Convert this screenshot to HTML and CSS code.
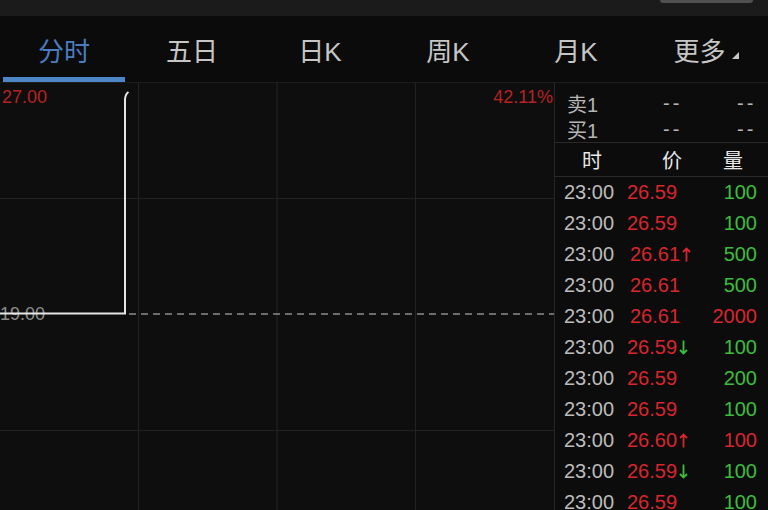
FILE: index.html
```html
<!DOCTYPE html>
<html lang="zh">
<head>
<meta charset="utf-8">
<title>分时</title>
<link rel="stylesheet" href="styles.css">
</head>
<body>
<div class="topstrip"><span class="pill"></span></div>
<nav class="tabs">
  <div class="tab active">分时</div>
  <div class="tab">五日</div>
  <div class="tab">日K</div>
  <div class="tab">周K</div>
  <div class="tab">月K</div>
  <div class="tab more">更多<span class="tri"></span></div>
</nav>
<main class="main">
  <section class="chart">
    <span class="lbl lbl-high">27.00</span>
    <span class="lbl lbl-pct">42.11%</span>
    <span class="lbl lbl-base">19.00</span>
    <svg class="canvas" width="554" height="427" viewBox="0 0 554 427">
      <g stroke="#222222" stroke-width="1.2" fill="none">
        <line x1="138.5" y1="0" x2="138.5" y2="427"/>
        <line x1="277" y1="0" x2="277" y2="427"/>
        <line x1="415.5" y1="0" x2="415.5" y2="427"/>
        <line x1="0" y1="115.5" x2="554" y2="115.5"/>
        <line x1="0" y1="347.5" x2="554" y2="347.5"/>
      </g>
      <line x1="129" y1="231" x2="554" y2="231" stroke="#8c8c8c" stroke-width="1.6" stroke-dasharray="7 5"/>
      <path d="M0 230.5 H125 V16 Q125.5 11 128.5 9" stroke="#e6e6e6" stroke-width="2" fill="none"/>
    </svg>
  </section>
  <aside class="panel">
    <div class="quote">
      <div class="qrow"><span>卖1</span><span class="dash">--</span><span class="dash">--</span></div>
      <div class="qrow"><span>买1</span><span class="dash">--</span><span class="dash">--</span></div>
    </div>
    <div class="thead"><span>时</span><span>价</span><span>量</span></div>
    <div class="ticks">
      <div class="tick"><span class="t">23:00</span><span class="p">26.59</span><span class="v g">100</span></div>
      <div class="tick"><span class="t">23:00</span><span class="p">26.59</span><span class="v g">100</span></div>
      <div class="tick"><span class="t">23:00</span><span class="p sh">26.61<svg class="arr" width="9" height="15" viewBox="0 0 9 15"><path d="M4.5 14.5 V1.5 M1 5 L4.5 1.5 L8 5" stroke="#d8262c" stroke-width="1.8" fill="none"/></svg></span><span class="v g">500</span></div>
      <div class="tick"><span class="t">23:00</span><span class="p sh">26.61</span><span class="v g">500</span></div>
      <div class="tick"><span class="t">23:00</span><span class="p sh">26.61</span><span class="v r">2000</span></div>
      <div class="tick"><span class="t">23:00</span><span class="p">26.59<svg class="arr" width="9" height="15" viewBox="0 0 9 15"><path d="M4.5 0.5 V13.5 M1 10 L4.5 13.5 L8 10" stroke="#3dbd3d" stroke-width="1.8" fill="none"/></svg></span><span class="v g">100</span></div>
      <div class="tick"><span class="t">23:00</span><span class="p">26.59</span><span class="v g">200</span></div>
      <div class="tick"><span class="t">23:00</span><span class="p">26.59</span><span class="v g">100</span></div>
      <div class="tick"><span class="t">23:00</span><span class="p">26.60<svg class="arr" width="9" height="15" viewBox="0 0 9 15"><path d="M4.5 14.5 V1.5 M1 5 L4.5 1.5 L8 5" stroke="#d8262c" stroke-width="1.8" fill="none"/></svg></span><span class="v r">100</span></div>
      <div class="tick"><span class="t">23:00</span><span class="p">26.59<svg class="arr" width="9" height="15" viewBox="0 0 9 15"><path d="M4.5 0.5 V13.5 M1 10 L4.5 13.5 L8 10" stroke="#3dbd3d" stroke-width="1.8" fill="none"/></svg></span><span class="v g">100</span></div>
      <div class="tick"><span class="t">23:00</span><span class="p">26.59</span><span class="v g">100</span></div>
    </div>
  </aside>
</main>
</body>
</html>
```

FILE: styles.css
```css
* { box-sizing: border-box; }
html, body {
  margin: 0;
  padding: 0;
  width: 768px;
  height: 510px;
  overflow: hidden;
  background: #0e0e0e;
  font-family: "Liberation Sans", "Noto Sans CJK SC", sans-serif;
}
.topstrip {
  height: 16px;
  background: #1b1b1b;
  position: relative;
}
.pill {
  position: absolute;
  right: 15px;
  top: 0;
  width: 93px;
  height: 3px;
  background: #505050;
  border-radius: 0 0 3px 3px;
}
.tabs {
  height: 67px;
  display: grid;
  grid-template-columns: repeat(6, 128px);
  background: #0b0b0b;
  border-bottom: 1px solid #1c1c1c;
}
.tab {
  position: relative;
  display: flex;
  align-items: center;
  justify-content: center;
  padding-top: 1px;
  font-size: 26px;
  color: #c6c6c6;
}
.tab.active { color: #4a7dc0; }
.tab.active::after {
  content: "";
  position: absolute;
  left: 3px;
  right: 3px;
  bottom: 0;
  height: 5px;
  background: #4c86c6;
}
.tab.more { padding-left: 4px; }
.tri {
  width: 0;
  height: 0;
  margin-left: 6px;
  margin-top: 12px;
  border-left: 7px solid transparent;
  border-bottom: 7px solid #c6c6c6;
}
.main {
  display: flex;
  height: 427px;
}
.chart {
  position: relative;
  width: 554px;
  flex: none;
  background: #0e0e0e;
}
.canvas { display: block; }
.lbl {
  position: absolute;
  font-size: 18px;
  line-height: 20px;
}
.lbl-high { left: 2px; top: 4px; color: #b82222; }
.lbl-pct { right: 1px; top: 4px; color: #b82222; }
.lbl-base { left: 0; top: 221px; color: #8c8c8c; }
.chart .canvas { position: absolute; left: 0; top: 0; }
.panel {
  flex: 1;
  border-left: 1px solid #262626;
  background: #0c0c0c;
}
.quote {
  padding-top: 6px;
  border-bottom: 1px solid #2a2a2a;
  height: 60px;
}
.qrow {
  display: grid;
  grid-template-columns: 96px 74px auto;
  padding-left: 12px;
  height: 26px;
  align-items: center;
  font-size: 20px;
  color: #b5b5b5;
}
.dash { letter-spacing: 3px; }
.thead {
  display: grid;
  grid-template-columns: 80px 61px auto;
  padding-left: 27px;
  height: 34px;
  align-items: center;
  font-size: 20px;
  color: #e8e8e8;
  border-bottom: 1px solid #2a2a2a;
}
.tick {
  display: grid;
  grid-template-columns: 63px 1fr auto;
  align-items: center;
  height: 31px;
  padding: 0 11px 0 9px;
  font-size: 20px;
}
.t { color: #bcbcbc; }
.p {
  color: #d8262c;
  display: flex;
  align-items: center;
}
.p.sh { padding-left: 3px; }
.arr { margin-left: 2px; }
.v { text-align: right; }
.g { color: #3dbd3d; }
.r { color: #d8262c; }
```
